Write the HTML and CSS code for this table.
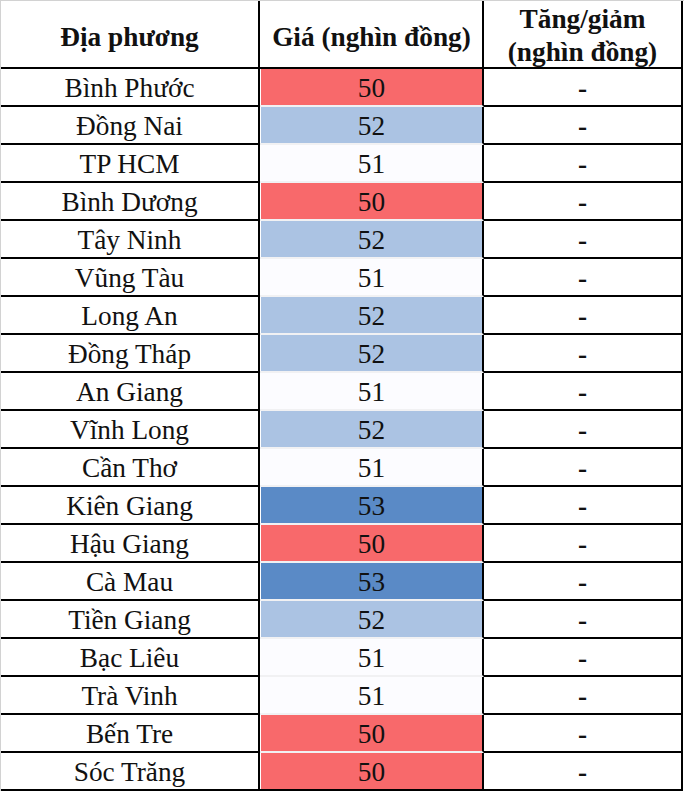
FILE: index.html
```html
<!DOCTYPE html>
<html lang="vi">
<head>
<meta charset="utf-8">
<title>Giá</title>
<link rel="stylesheet" href="styles.css">
</head>
<body>
<div class="sheet">
  <div class="cell c1 head one">Địa phương</div>
  <div class="cell c2 head one">Giá (nghìn đồng)</div>
  <div class="cell c3 head two">Tăng/giảm<br>(nghìn đồng)</div>

  <div class="cell c1">Bình Phước</div>
  <div class="cell c2"><div class="fill lo">50</div></div>
  <div class="cell c3 dash">-</div>

  <div class="cell c1">Đồng Nai</div>
  <div class="cell c2"><div class="fill up">52</div></div>
  <div class="cell c3 dash">-</div>

  <div class="cell c1">TP HCM</div>
  <div class="cell c2"><div class="fill mid">51</div></div>
  <div class="cell c3 dash">-</div>

  <div class="cell c1">Bình Dương</div>
  <div class="cell c2"><div class="fill lo">50</div></div>
  <div class="cell c3 dash">-</div>

  <div class="cell c1">Tây Ninh</div>
  <div class="cell c2"><div class="fill up">52</div></div>
  <div class="cell c3 dash">-</div>

  <div class="cell c1">Vũng Tàu</div>
  <div class="cell c2"><div class="fill mid">51</div></div>
  <div class="cell c3 dash">-</div>

  <div class="cell c1">Long An</div>
  <div class="cell c2"><div class="fill up">52</div></div>
  <div class="cell c3 dash">-</div>

  <div class="cell c1">Đồng Tháp</div>
  <div class="cell c2"><div class="fill up">52</div></div>
  <div class="cell c3 dash">-</div>

  <div class="cell c1">An Giang</div>
  <div class="cell c2"><div class="fill mid">51</div></div>
  <div class="cell c3 dash">-</div>

  <div class="cell c1">Vĩnh Long</div>
  <div class="cell c2"><div class="fill up">52</div></div>
  <div class="cell c3 dash">-</div>

  <div class="cell c1">Cần Thơ</div>
  <div class="cell c2"><div class="fill mid">51</div></div>
  <div class="cell c3 dash">-</div>

  <div class="cell c1">Kiên Giang</div>
  <div class="cell c2"><div class="fill hi">53</div></div>
  <div class="cell c3 dash">-</div>

  <div class="cell c1">Hậu Giang</div>
  <div class="cell c2"><div class="fill lo">50</div></div>
  <div class="cell c3 dash">-</div>

  <div class="cell c1">Cà Mau</div>
  <div class="cell c2"><div class="fill hi">53</div></div>
  <div class="cell c3 dash">-</div>

  <div class="cell c1">Tiền Giang</div>
  <div class="cell c2"><div class="fill up">52</div></div>
  <div class="cell c3 dash">-</div>

  <div class="cell c1">Bạc Liêu</div>
  <div class="cell c2"><div class="fill mid">51</div></div>
  <div class="cell c3 dash">-</div>

  <div class="cell c1">Trà Vinh</div>
  <div class="cell c2"><div class="fill mid">51</div></div>
  <div class="cell c3 dash">-</div>

  <div class="cell c1">Bến Tre</div>
  <div class="cell c2"><div class="fill lo">50</div></div>
  <div class="cell c3 dash">-</div>

  <div class="cell c1 last">Sóc Trăng</div>
  <div class="cell c2 last"><div class="fill lo">50</div></div>
  <div class="cell c3 dash last">-</div>
</div>
</body>
</html>
```

FILE: styles.css
```css
html, body {
  margin: 0;
  padding: 0;
  background: #ffffff;
}

.sheet {
  display: grid;
  grid-template-columns: 259px 224px 199px;
  grid-template-rows: 68px;
  grid-auto-rows: 38px;
  width: 683px;
  border-top: 1px solid #d2d2d2;
  border-left: 1px solid #d2d2d2;
  font-family: "Liberation Serif", "Times New Roman", serif;
  font-size: 27.3px;
  color: #111111;
}

.cell {
  box-sizing: border-box;
  display: flex;
  align-items: center;
  justify-content: center;
  text-align: center;
  line-height: 33px;
  padding-top: 2px;
  border-right: 2px solid #000000;
  border-bottom: 2px solid #000000;
  background: #ffffff;
  white-space: nowrap;
}

.c2 {
  border-bottom-color: #f1f1f3;
  padding-top: 0;
  padding-left: 1px;
  align-items: stretch;
}

.c2.head,
.c2.last {
  border-bottom-color: #000000;
}

.head {
  font-weight: bold;
}

.head.one {
  padding-top: 6px;
}

.head.two {
  padding-top: 4px;
}

.c2.head {
  align-items: center;
}

.fill {
  flex: 1;
  display: flex;
  align-items: center;
  justify-content: center;
  padding-top: 2px;
}

.lo { background: #f8696b; }
.mid { background: #fcfcff; }
.up { background: #abc3e3; }
.hi { background: #5a8ac6; }

.dash {
  font-weight: bold;
}
```
